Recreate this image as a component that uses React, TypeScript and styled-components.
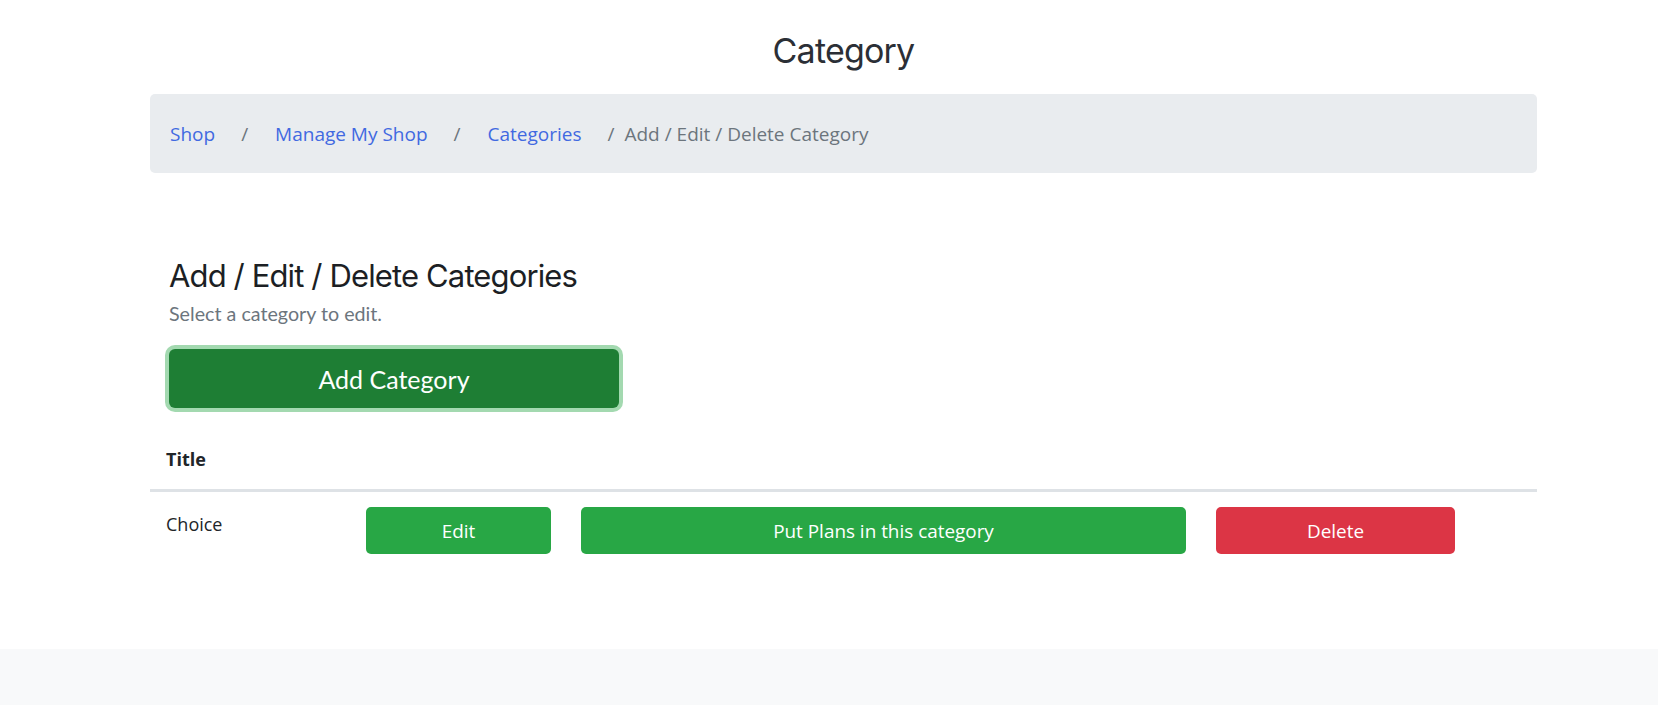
import React from 'react'
import styled, { createGlobalStyle } from 'styled-components'

const GlobalStyle = createGlobalStyle`
  html, body {
    margin: 0;
    padding: 0;
    background: #ffffff;
  }
  body {
    font-family: 'Open Sans', 'Liberation Sans', sans-serif;
    color: #212529;
  }
  * {
    box-sizing: border-box;
  }
`

const crumbs = [
  { label: 'Shop', href: '#' },
  { label: 'Manage My Shop', href: '#' },
  { label: 'Categories', href: '#' },
]

const Page = styled.div`
  display: flex;
  flex-direction: column;
  min-height: 705px;
`

const Main = styled.main`
  width: 1387px;
  margin-left: 150px;
  padding-bottom: 80px;
`

const PageTitle = styled.h1`
  margin: 0;
  padding-top: 30px;
  text-align: center;
  font-family: Inter, 'Noto Sans', sans-serif;
  font-weight: 400;
  font-size: 34px;
  line-height: 41px;
  letter-spacing: -0.8px;
  color: #2b2f36;
`

const Breadcrumb = styled.nav`
  margin-top: 23px;
  height: 79px;
  display: flex;
  align-items: center;
  padding: 1px 20px 0;
  background: #e9ecef;
  border-radius: 5px;
  font-size: 19px;
`

const Crumb = styled.a`
  color: #4169e1;
  text-decoration: none;
`

const Separator = styled.span<{ $last?: boolean }>`
  color: #6c757d;
  margin: 0 ${(p) => (p.$last ? 10 : 27)}px 0 26px;
`

const Current = styled.span`
  color: #6c757d;
`

const Section = styled.section`
  padding: 0 19px;
  margin-top: 84px;
`

const Heading = styled.h2`
  margin: 0;
  font-family: Inter, 'Noto Sans', sans-serif;
  font-weight: 400;
  font-size: 31px;
  line-height: 38px;
  letter-spacing: -0.87px;
  color: #1c1f24;
`

const Lead = styled.p`
  margin: 6px 0 0;
  font-family: Lato, 'Open Sans', sans-serif;
  font-size: 19.7px;
  line-height: 26px;
  color: #6c757d;
`

const BigButton = styled.button`
  margin-top: 22px;
  width: 450px;
  height: 59px;
  border: none;
  border-radius: 6px;
  background: #1e7e34;
  color: #ffffff;
  font-family: Lato, 'Open Sans', sans-serif;
  font-size: 25px;
  box-shadow: 0 0 0 4px rgba(72, 180, 97, 0.5);
  cursor: pointer;
`

const Table = styled.div`
  margin-top: 26px;
  display: grid;
  grid-template-columns: 201px 215px 635px 269px 1fr;
`

const HeadCell = styled.div`
  padding: 12px 16px 17px;
  font-weight: 700;
  font-size: 18px;
  line-height: 26px;
  border-bottom: 3px solid #dee2e6;
`

const Cell = styled.div`
  padding: 15px 15px;
  font-size: 18px;
  line-height: 26px;
`

const TextCell = styled(Cell)`
  padding-left: 16px;
  padding-top: 19px;
`

const ActionButton = styled.button<{ $variant: 'success' | 'danger' }>`
  width: 100%;
  height: 47px;
  border: none;
  border-radius: 5px;
  background: ${(p) => (p.$variant === 'danger' ? '#dc3545' : '#28a745')};
  color: #ffffff;
  font-family: 'Open Sans', 'Liberation Sans', sans-serif;
  font-size: 18.9px;
  cursor: pointer;
`

const Footer = styled.footer`
  flex: 1;
  background: #f8f9fa;
`

export default function App() {
  return (
    <Page>
      <GlobalStyle />
      <Main>
        <PageTitle>Category</PageTitle>
        <Breadcrumb>
          {crumbs.map((c, i) => (
            <React.Fragment key={c.label}>
              <Crumb href={c.href}>{c.label}</Crumb>
              <Separator $last={i === crumbs.length - 1}>/</Separator>
            </React.Fragment>
          ))}
          <Current>Add / Edit / Delete Category</Current>
        </Breadcrumb>
        <Section>
          <Heading>Add / Edit / Delete Categories</Heading>
          <Lead>Select a category to edit.</Lead>
          <BigButton>Add Category</BigButton>
        </Section>
        <Table>
          <HeadCell>Title</HeadCell>
          <HeadCell />
          <HeadCell />
          <HeadCell />
          <HeadCell />
          <TextCell>Choice</TextCell>
          <Cell>
            <ActionButton $variant="success">Edit</ActionButton>
          </Cell>
          <Cell>
            <ActionButton $variant="success">Put Plans in this category</ActionButton>
          </Cell>
          <Cell>
            <ActionButton $variant="danger">Delete</ActionButton>
          </Cell>
          <Cell />
        </Table>
      </Main>
      <Footer />
    </Page>
  )
}
